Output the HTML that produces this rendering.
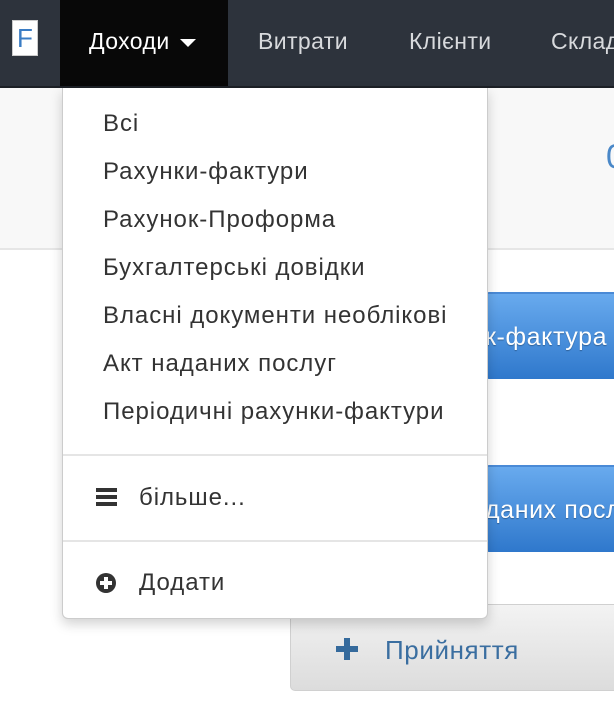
<!DOCTYPE html>
<html><head><meta charset="utf-8"><style>
*{margin:0;padding:0;box-sizing:border-box}
body{width:614px;height:718px;overflow:hidden;background:#fff;font-family:"Liberation Sans",Arial,sans-serif;position:relative}
.nav{position:absolute;left:0;top:0;width:614px;height:88px;background:#2d333c;border-bottom:2px solid #1c2026}
.logo{position:absolute;left:12px;top:20px;width:26px;height:36px;background:#fff;border:1px solid #ccc;color:#3a7cc4;font-size:26px;line-height:34px;text-align:center}
.act{position:absolute;left:60px;top:0;width:168px;height:86px;background:#080808}
.ni{position:absolute;top:28px;font-size:23px;letter-spacing:.4px;color:#d8dadd}
.hdr{position:absolute;left:0;top:88px;width:614px;height:162px;background:#f8f8f8;border-bottom:2px solid #e6e6e6}
.btn{position:absolute;left:485px;width:140px;height:87px;background:linear-gradient(#68aaee,#2f78cc);border-top:2px solid #4a8ad6;border-radius:4px;color:#fff;font-size:25px;letter-spacing:.6px;line-height:87px;text-shadow:0 1px 1px rgba(0,0,0,.3);white-space:nowrap;overflow:hidden}
.gb{position:absolute;left:290px;top:604px;width:340px;height:87px;background:linear-gradient(#f3f3f3,#dcdcdc);border:1px solid #d0d0d0;border-radius:5px;color:#3a6ea0;font-size:26px;letter-spacing:.6px}
.menu{position:absolute;left:62px;top:88px;width:426px;height:531px;background:#fff;border:1px solid #ccc;border-top:none;border-radius:0 0 6px 6px;box-shadow:0 5px 12px rgba(0,0,0,.18)}
.it{position:absolute;left:40px;font-size:24px;letter-spacing:.95px;color:#333;white-space:nowrap}
.dv{position:absolute;left:0;width:424px;height:2px;background:#e5e5e5}
</style></head><body>
<div class="nav">
<div class="logo">F</div>
<div class="act"></div>
<div class="ni" style="left:89px;color:#fff">Доходи <span style="display:inline-block;width:0;height:0;border-left:8px solid transparent;border-right:8px solid transparent;border-top:8px solid #fff;vertical-align:middle;margin-left:4px"></span></div>
<div class="ni" style="left:258px">Витрати</div>
<div class="ni" style="left:409px">Клієнти</div>
<div class="ni" style="left:551px">Склад</div>
</div>
<div class="hdr"><div style="position:absolute;left:606px;top:50px;font-size:34px;color:#4a88c8">0</div></div>
<div class="btn" style="top:292px">к-фактура</div>
<div class="btn" style="top:465px">даних посл</div>
<div class="gb"><div style="position:absolute;left:45px;top:41px;width:22px;height:6px;background:#356a9c"></div><div style="position:absolute;left:53px;top:33px;width:6px;height:22px;background:#356a9c"></div><span style="position:absolute;left:94px;top:30px">Прийняття</span></div>
<div class="menu">
<div class="it" style="top:22px">Всі</div>
<div class="it" style="top:70px">Рахунки-фактури</div>
<div class="it" style="top:118px">Рахунок-Проформа</div>
<div class="it" style="top:166px">Бухгалтерські довідки</div>
<div class="it" style="top:214px">Власні документи необлікові</div>
<div class="it" style="top:262px">Акт наданих послуг</div>
<div class="it" style="top:310px">Періодичні рахунки-фактури</div>
<div class="dv" style="top:366px"></div>
<div style="position:absolute;left:33px;top:400px;width:21px;height:4px;background:#333;box-shadow:0 7px 0 #333,0 14px 0 #333"></div>
<div class="it" style="top:396px;left:76px">більше...</div>
<div class="dv" style="top:452px"></div>
<div style="position:absolute;left:33px;top:485px;width:20px;height:20px;border-radius:50%;background:#333"><div style="position:absolute;left:8px;top:4px;width:4px;height:12px;background:#fff"></div><div style="position:absolute;left:4px;top:8px;width:12px;height:4px;background:#fff"></div></div>
<div class="it" style="top:481px;left:76px">Додати</div>
</div>
</body></html>
